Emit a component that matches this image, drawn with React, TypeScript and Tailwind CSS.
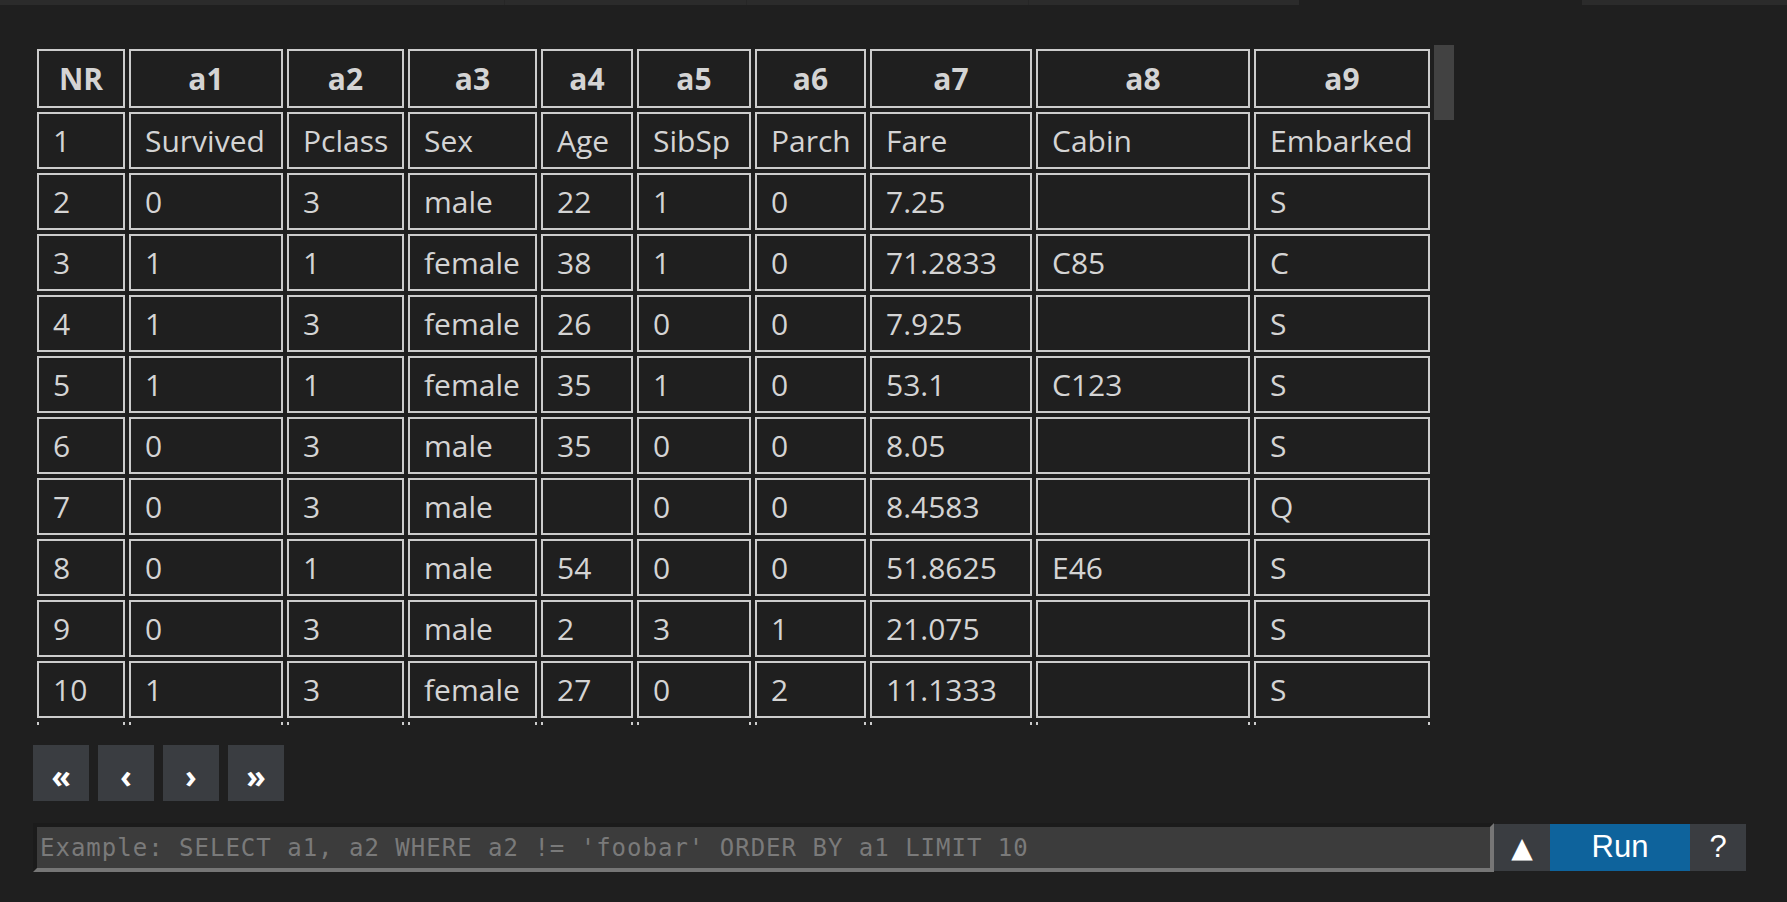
import React from "react";

const headers = ["NR", "a1", "a2", "a3", "a4", "a5", "a6", "a7", "a8", "a9"];

const colWidths = [
    "w-[88px]",
    "w-[154px]",
    "w-[117px]",
    "w-[129px]",
    "w-[92px]",
    "w-[114px]",
    "w-[111px]",
    "w-[162px]",
    "w-[214px]",
    "w-[176px]",
];

const rows: string[][] = [
    ["1", "Survived", "Pclass", "Sex", "Age", "SibSp", "Parch", "Fare", "Cabin", "Embarked"],
    ["2", "0", "3", "male", "22", "1", "0", "7.25", "", "S"],
    ["3", "1", "1", "female", "38", "1", "0", "71.2833", "C85", "C"],
    ["4", "1", "3", "female", "26", "0", "0", "7.925", "", "S"],
    ["5", "1", "1", "female", "35", "1", "0", "53.1", "C123", "S"],
    ["6", "0", "3", "male", "35", "0", "0", "8.05", "", "S"],
    ["7", "0", "3", "male", "", "0", "0", "8.4583", "", "Q"],
    ["8", "0", "1", "male", "54", "0", "0", "51.8625", "E46", "S"],
    ["9", "0", "3", "male", "2", "3", "1", "21.075", "", "S"],
    ["10", "1", "3", "female", "27", "0", "2", "11.1333", "", "S"],
];

const pager = ["«", "‹", "›", "»"];

export default function App() {
    return (
        <div className="w-full h-[902px] bg-[#1f1f1f] overflow-hidden font-['Open_Sans',sans-serif] text-[#d4d4d4]">
            {/* top strip (cut-off tab bar) */}
            <div className="flex h-[5px]">
                <div className="w-[505px] bg-[#2b2b2b] border-r border-[#262626]" />
                <div className="w-[242px] bg-[#2b2b2b] border-r border-[#262626]" />
                <div className="w-[282px] bg-[#2b2b2b] border-r border-[#262626]" />
                <div className="w-[270px] bg-[#2b2b2b]" />
                <div className="w-[283px]" />
                <div className="flex-1 bg-[#2b2b2b]" />
            </div>

            <div className="pl-[33px] pt-[40px]">
                {/* table + scrollbar */}
                <div className="flex w-[1421px] h-[680px]">
                    <div className="flex-1 overflow-hidden">
                        <table className="table-fixed w-[1401px] border-separate border-spacing-1 text-[30px] leading-[36px]">
                            <thead>
                                <tr>
                                    {headers.map((h, i) => (
                                        <th
                                            key={h}
                                            className={`${colWidths[i]} h-[59px] p-0 border-2 border-[#cccccc] text-center font-bold`}
                                        >
                                            {h}
                                        </th>
                                    ))}
                                </tr>
                            </thead>
                            <tbody>
                                {rows.map((row, r) => (
                                    <tr key={r}>
                                        {row.map((cell, c) => (
                                            <td
                                                key={c}
                                                className="h-[57px] py-0 pl-[14px] pr-1 border-2 border-[#cccccc] whitespace-nowrap"
                                            >
                                                {cell}
                                            </td>
                                        ))}
                                    </tr>
                                ))}
                                {/* next row, only its top edge peeks out */}
                                <tr>
                                    {headers.map((h) => (
                                        <td key={h} className="h-[57px] p-0 border-l-2 border-r-2 border-[#cccccc]" />
                                    ))}
                                </tr>
                            </tbody>
                        </table>
                    </div>
                    <div className="w-[20px]">
                        <div className="h-[75px] bg-[#424242]" />
                    </div>
                </div>

                {/* pagination */}
                <div className="flex gap-[9px] mt-[20px]">
                    {pager.map((p) => (
                        <button
                            key={p}
                            className="w-[56px] h-[56px] bg-[#3a3d41] text-white font-bold text-[32px] leading-none flex items-center justify-center pt-[6px]"
                        >
                            {p}
                        </button>
                    ))}
                </div>

                {/* query bar */}
                <div className="flex items-center mt-[22px]">
                    <input
                        className="w-[1461px] h-[49px] bg-[#3c3c3c] border-4 border-t-[#1b1b1b] border-l-[#1b1b1b] border-b-[#767676] border-r-[#767676] pl-[3px] font-['DejaVu_Sans_Mono',monospace] text-[24px] tracking-[1px] text-[#d4d4d4] placeholder:text-[#7a7a7a] outline-none"
                        placeholder="Example: SELECT a1, a2 WHERE a2 != 'foobar' ORDER BY a1 LIMIT 10"
                    />
                    <button className="w-[56px] h-[47px] bg-[#3a3d41] text-white text-[28px] font-['DejaVu_Sans',sans-serif] flex items-center justify-center">
                        ▲
                    </button>
                    <button className="w-[140px] h-[47px] bg-[#0e639c] text-white text-[31px] font-['Liberation_Sans',sans-serif] flex items-center justify-center">
                        Run
                    </button>
                    <button className="w-[56px] h-[47px] bg-[#3a3d41] text-white text-[31px] font-['Liberation_Sans',sans-serif] flex items-center justify-center">
                        ?
                    </button>
                </div>
            </div>
        </div>
    );
}
